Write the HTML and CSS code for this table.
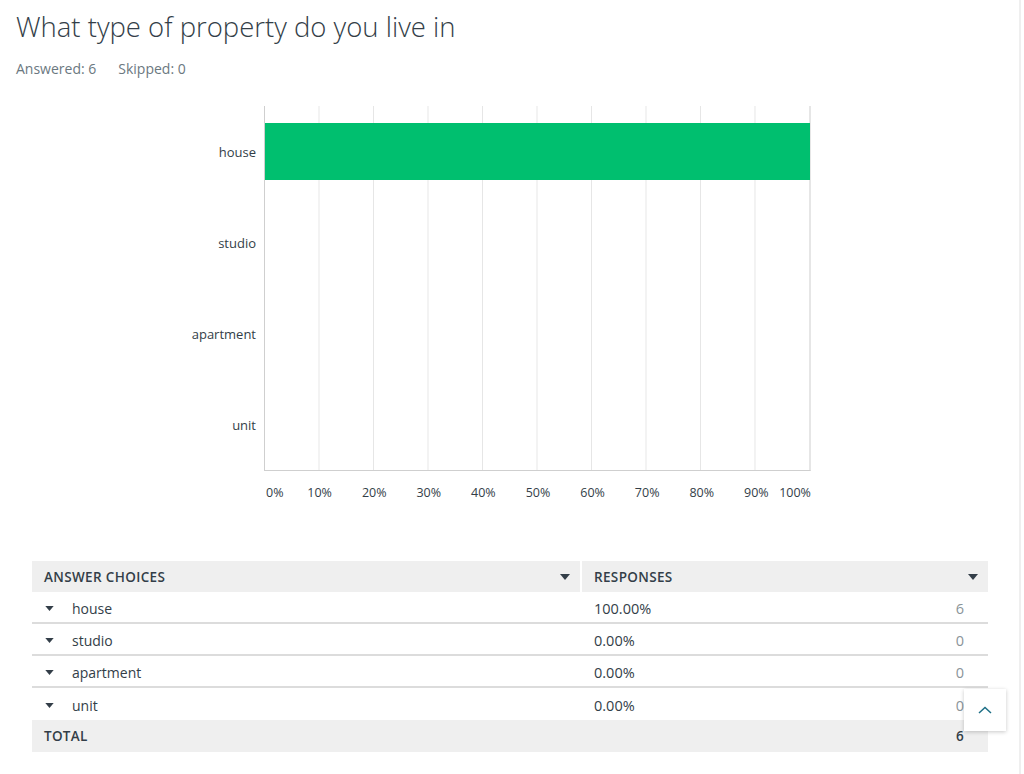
FILE: index.html
```html
<!DOCTYPE html>
<html>
<head>
<meta charset="utf-8">
<link rel="stylesheet" href="styles.css">
</head>
<body>
<div class="page">
  <h1 class="title">What type of property do you live in</h1>
  <div class="meta"><span>Answered: 6</span><span>Skipped: 0</span></div>

  <div class="chart">
    <div class="ylabels">
      <div class="ylabel">house</div>
      <div class="ylabel">studio</div>
      <div class="ylabel">apartment</div>
      <div class="ylabel">unit</div>
    </div>
    <div class="plot">
      <div class="band"><div class="bar" style="width:100%"></div></div>
      <div class="band"><div class="bar" style="width:0%"></div></div>
      <div class="band"><div class="bar" style="width:0%"></div></div>
      <div class="band"><div class="bar" style="width:0%"></div></div>
    </div>
    <div></div>
    <div class="xaxis">
      <span class="tick first"><span>0%</span></span>
      <span class="tick"><span>10%</span></span>
      <span class="tick"><span>20%</span></span>
      <span class="tick"><span>30%</span></span>
      <span class="tick"><span>40%</span></span>
      <span class="tick"><span>50%</span></span>
      <span class="tick"><span>60%</span></span>
      <span class="tick"><span>70%</span></span>
      <span class="tick"><span>80%</span></span>
      <span class="tick"><span>90%</span></span>
      <span class="tick last"><span>100%</span></span>
    </div>
  </div>

  <div class="table">
    <div class="row head">
      <div class="c1"><span>ANSWER CHOICES</span><svg class="tri" viewBox="0 0 10 6"><path d="M0 0h10L5 6z"/></svg></div>
      <div class="c2"><span>RESPONSES</span><svg class="tri" viewBox="0 0 10 6"><path d="M0 0h10L5 6z"/></svg></div>
    </div>
    <div class="row body">
      <div class="c1"><svg class="tri small" viewBox="0 0 10 6"><path d="M0 0h10L5 6z"/></svg><span class="lbl">house</span></div>
      <div class="c2"><span>100.00%</span><span class="count">6</span></div>
    </div>
    <div class="row body">
      <div class="c1"><svg class="tri small" viewBox="0 0 10 6"><path d="M0 0h10L5 6z"/></svg><span class="lbl">studio</span></div>
      <div class="c2"><span>0.00%</span><span class="count">0</span></div>
    </div>
    <div class="row body">
      <div class="c1"><svg class="tri small" viewBox="0 0 10 6"><path d="M0 0h10L5 6z"/></svg><span class="lbl">apartment</span></div>
      <div class="c2"><span>0.00%</span><span class="count">0</span></div>
    </div>
    <div class="row body last">
      <div class="c1"><svg class="tri small" viewBox="0 0 10 6"><path d="M0 0h10L5 6z"/></svg><span class="lbl">unit</span></div>
      <div class="c2"><span>0.00%</span><span class="count">0</span></div>
    </div>
    <div class="row total">
      <div class="c1"><span>TOTAL</span></div>
      <div class="c2"><span></span><span class="count">6</span></div>
    </div>
  </div>
</div>

<button class="totop" aria-label="Back to top"><svg viewBox="0 0 14 8"><path d="M1 7L7 1.5L13 7" fill="none" stroke="#1d6f86" stroke-width="1.5"/></svg></button>
<div class="edge"></div>
</body>
</html>
```

FILE: styles.css
```css
* { box-sizing: border-box; }
html, body { margin: 0; padding: 0; background: #fff; }
body {
  font-family: "Open Sans", "Noto Sans", sans-serif;
  color: #333e48;
  width: 1024px;
  height: 774px;
  overflow: hidden;
}
.page { padding: 8px 16px 0 16px; }

.title {
  margin: 0;
  font-weight: 300;
  font-size: 27.5px;
  line-height: 38px;
  color: #333e48;
}
.meta {
  margin-top: 13px;
  display: flex;
  gap: 22px;
  font-size: 14px;
  line-height: 20px;
  color: #6b787f;
}

.chart {
  margin-top: 27px;
  display: grid;
  grid-template-columns: 240px 546px;
  column-gap: 9px;
}
.ylabels { display: flex; flex-direction: column; }
.ylabel {
  height: 91px;
  display: flex;
  align-items: center;
  justify-content: flex-end;
  font-size: 13px;
  padding-top: 1px;
}
.plot {
  height: 365px;
  border-left: 1px solid #cfcfcf;
  border-bottom: 1px solid #cfcfcf;
  border-right: 1px solid #e6e6e6;
  background-image: linear-gradient(to right, #e6e6e6 1px, transparent 1px);
  background-size: 10% 100%;
  background-position: -1px 0;
  display: flex;
  flex-direction: column;
  margin-left: -1px;
}
.band {
  height: 91px;
  display: flex;
  align-items: center;
}
.bar { height: 57px; background: #00bf6f; }

.xaxis {
  margin-top: 13px;
  display: flex;
  justify-content: space-between;
  font-size: 12.5px;
  line-height: 18px;
}
.tick { width: 0; display: flex; justify-content: center; white-space: nowrap; }
.tick.first { justify-content: flex-start; }
.tick.first span { margin-left: 1px; }
.tick.last { justify-content: flex-end; }

.table {
  margin: 59px 0 0 16px;
  width: 956px;
  font-size: 14px;
}
.row { display: grid; grid-template-columns: 550px 406px; }
.row > div { display: flex; align-items: center; }
.head { background: #efefef; height: 31px; font-weight: 600; font-size: 13.5px; letter-spacing: 0.35px; }
.head .c1 { padding: 0 10px 0 12px; justify-content: space-between; border-right: 2px solid #fff; }
.head .c2 { padding: 0 10px 0 12px; justify-content: space-between; }
.tri { width: 10px; height: 6px; fill: #333e48; }
.tri.small { width: 9px; height: 5px; }
.body { height: 32px; border-bottom: 2px solid #dcdcdc; padding-top: 2px; }
.body.last { border-bottom: none; height: 32px; }
.body .c1 { padding-left: 13px; }
.body .c1 .lbl { margin-left: 18px; }
.body .c2 { font-size: 14.5px; }
.body .c2, .total .c2 { padding: 0 24px 0 12px; justify-content: space-between; }
.count { color: #8a9499; }
.total { background: #efefef; height: 32px; font-weight: 600; font-size: 13.5px; letter-spacing: 0.3px; }
.total .c1 { padding-left: 12px; }
.total .count { color: #333e48; }

.totop {
  position: fixed;
  left: 964px;
  top: 689px;
  width: 42px;
  height: 42px;
  border: none;
  background: #fff;
  box-shadow: 0 1px 4px rgba(0,0,0,0.22);
  display: flex;
  align-items: center;
  justify-content: center;
  padding: 0;
}
.totop svg { width: 14px; height: 8px; }
.edge {
  position: fixed;
  left: 1019px;
  top: 0;
  width: 2px;
  height: 774px;
  background: #efefef;
}
```
